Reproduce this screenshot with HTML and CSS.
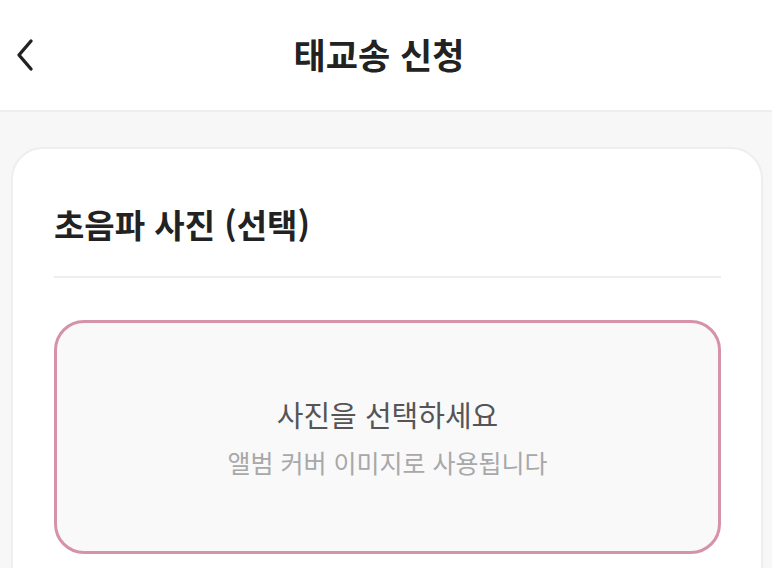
FILE: index.html
```html
<!DOCTYPE html>
<html lang="ko">
<head>
<meta charset="utf-8">
<link rel="stylesheet" href="styles.css">
</head>
<body>
<header class="topbar">
  <button class="back" aria-label="뒤로">
    <svg width="20" height="34" viewBox="0 0 20 34"><path d="M16 3 L4 17 L16 31" fill="none" stroke="#222" stroke-width="3.4" stroke-linecap="round" stroke-linejoin="round"/></svg>
  </button>
  <h1 class="title">태교송 신청</h1>
</header>
<main class="content">
  <section class="card">
    <h2 class="section-title">초음파 사진 (선택)</h2>
    <div class="divider"></div>
    <div class="upload">
      <p class="upload-main">사진을 선택하세요</p>
      <p class="upload-sub">앨범 커버 이미지로 사용됩니다</p>
    </div>
  </section>
</main>
</body>
</html>
```
FILE: styles.css
```css
* { box-sizing: border-box; }
html, body { margin: 0; padding: 0; }
body {
  background: #f7f7f7;
  font-family: "Noto Sans CJK KR", "Noto Sans", sans-serif;
  width: 772px;
  height: 568px;
  overflow: hidden;
}
.topbar {
  position: relative;
  height: 112px;
  background: #fff;
  border-bottom: 2px solid #eeeeee;
  display: flex;
  align-items: center;
  justify-content: center;
}
.back {
  position: absolute;
  left: 15px;
  top: 38px;
  border: 0;
  background: none;
  padding: 0;
  display: flex;
}
.title {
  margin: 0 14px 0 0;
  font-size: 35px;
  font-weight: 700;
  color: #222;
  line-height: 44px;
  transform: translateY(-1px);
}
.content {
  height: 456px;
  overflow: hidden;
  padding: 35px 9px 0 11px;
}
.card {
  background: #fff;
  border: 2px solid #eeeeee;
  border-radius: 32px;
  padding: 52px 40px 60px 41px;
}
.section-title {
  margin: 0;
  font-size: 33px;
  font-weight: 700;
  color: #222;
  line-height: 46px;
}
.divider {
  height: 2px;
  background: #eeeeee;
  margin-top: 29px;
}
.upload {
  margin-top: 42px;
  height: 234px;
  border: 3px solid #d592a8;
  border-radius: 30px;
  background: #f9f9fa;
  display: flex;
  flex-direction: column;
  align-items: center;
  justify-content: center;
}
.upload-main {
  margin: 0;
  font-size: 29px;
  color: #555;
  line-height: 38px;
}
.upload-sub {
  margin: 12px 0 0;
  font-size: 25px;
  color: #a8a8a8;
  line-height: 34px;
}
```
